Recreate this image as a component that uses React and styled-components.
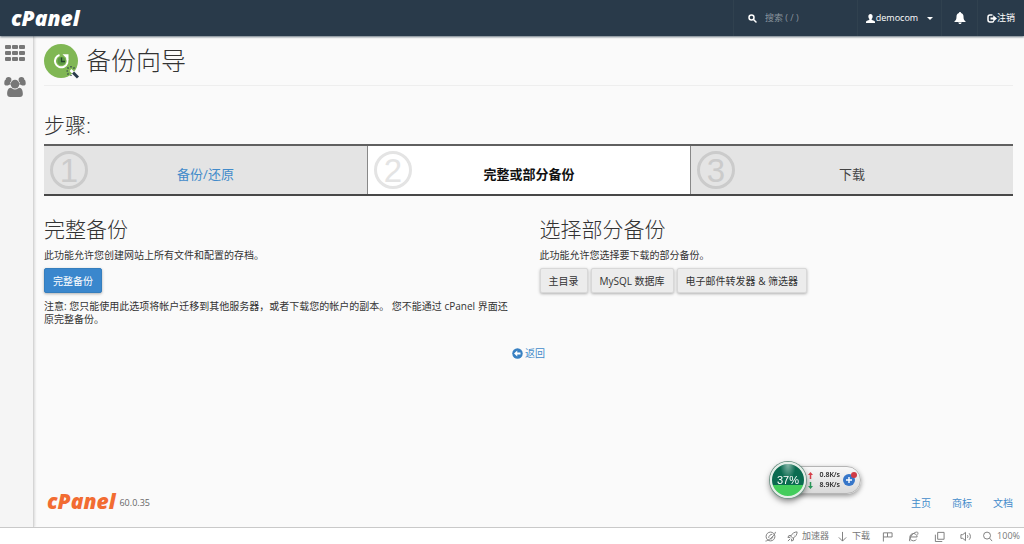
import React from "react";
import styled, { createGlobalStyle } from "styled-components";

const latin = '"Open Sans", "Noto Sans CJK SC", sans-serif';

const GlobalStyle = createGlobalStyle`
  *, *::before, *::after { box-sizing: border-box; }
  body {
    margin: 0;
    background: #fafafa;
    color: #333;
    font-family: ${latin};
    font-size: 10px;
    line-height: 13px;
  }
  button, input { font-family: inherit; }
  a { color: #428bca; text-decoration: none; }
  svg { display: block; flex: none; }
`;

const Page = styled.div`
  min-height: 100vh;
  display: flex;
  flex-direction: column;
`;

/* ---------- header ---------- */

const Header = styled.header`
  position: relative;
  height: 36px;
  display: flex;
  align-items: stretch;
  background: #293a4a;
  color: #fff;
  box-shadow: 0 1px 2px rgba(41, 58, 74, 0.7);
`;

const Logo = styled.a`
  font-family: "Open Sans", sans-serif;
  font-weight: 800;
  font-style: italic;
  font-size: 21px;
  line-height: 20px;
  color: ${(p) => p.$color};
`;

const Brand = styled.div`
  flex: 1;
  display: flex;
  align-items: center;
  padding-left: 11px;
`;

const HeaderCell = styled.div`
  width: ${(p) => p.$width}px;
  display: flex;
  align-items: center;
  border-left: 1px solid #30414f;
`;

const SearchLabel = styled.label`
  display: flex;
  align-items: center;
  gap: 8px;
  padding-left: 14px;
`;

const SearchInput = styled.input`
  width: 80px;
  padding: 0;
  border: 0;
  outline: 0;
  background: transparent;
  color: #fff;
  font-size: 9px;
  line-height: 14px;
  &::placeholder { color: #8b959e; opacity: 1; }
`;

const HeaderButton = styled.button`
  flex: 1;
  height: 100%;
  display: flex;
  align-items: center;
  justify-content: center;
  gap: ${(p) => p.$gap || 0}px;
  padding: 0;
  border: 0;
  background: transparent;
  color: #fff;
  font-size: 9px;
  line-height: 14px;
`;

const Caret = styled.span`
  margin-left: 8px;
  border: 3px solid transparent;
  border-top-color: #fff;
  border-bottom: 0;
`;

/* ---------- body ---------- */

const Body = styled.div`
  flex: 1;
  display: flex;
`;

const Sidebar = styled.nav`
  width: 34px;
  padding: 9px 3px 0 0;
  display: flex;
  flex-direction: column;
  align-items: center;
  gap: 16px;
  background: #f5f5f5;
  border-right: 1px solid #d5d5d5;
  box-shadow: 1px 0 2px rgba(0, 0, 0, 0.12);
`;

const SideLink = styled.a`
  width: 30px;
  display: flex;
  justify-content: center;
  color: #777;
`;

const Main = styled.main`
  flex: 1;
  min-width: 0;
  display: flex;
  flex-direction: column;
  padding: 8px 11px 16px 10px;
`;

const TitleRow = styled.div`
  display: flex;
  align-items: center;
  gap: 7px;
  height: 42px;
  padding-bottom: 6px;
  border-bottom: 1px solid #eee;
`;

const Title = styled.h1`
  margin: 0;
  font-size: 25px;
  line-height: 32px;
  font-weight: 300;
  padding-bottom: 4px;
`;

const SubTitle = styled.h2`
  margin: 0;
  font-size: 21px;
  line-height: 28px;
  font-weight: 300;
`;

const StepsSection = styled.section`
  padding-top: 25px;
`;

const Steps = styled.ol`
  margin: 5px 0 0;
  padding: 0;
  list-style: none;
  display: grid;
  grid-template-columns: repeat(3, 1fr);
  border-top: 2px solid #606060;
  border-bottom: 2px solid #484848;
`;

const Step = styled.li`
  display: grid;
  grid-template-columns: 38px 1fr 38px;
  align-items: center;
  height: 48px;
  padding: 0 6px;
  font-size: 13px;
  line-height: 18px;
  text-align: center;
  background: ${(p) => (p.$active ? "#fff" : "#e4e4e4")};
  color: ${(p) => (p.$active ? "#111" : "#444")};
  font-weight: ${(p) => (p.$active ? 700 : 400)};
  & + & { border-left: 1px solid #888; }
`;

const StepNumber = styled.span`
  width: 38px;
  height: 38px;
  border: 3px solid;
  border-radius: 50%;
  color: ${(p) => (p.$active ? "#e4e4e4" : "#cbcbcb")};
  font-family: "Liberation Sans", sans-serif;
  font-size: 33px;
  line-height: 33px;
  font-weight: 400;
`;

const StepLabel = styled.span`
  padding-top: 8px;
`;

const Columns = styled.div`
  display: grid;
  grid-template-columns: 1fr 1fr;
  gap: 22px;
  padding-top: 19px;
`;

const Text = styled.p`
  margin: ${(p) => p.$top}px 0 0;
`;

const ButtonRow = styled.div`
  display: flex;
  gap: 3px;
  margin-top: 6px;
`;

const Button = styled.button`
  height: 25px;
  padding: 0 8px;
  border: 1px solid ${(p) => (p.$primary ? "#357ebd" : "#d8d8d8")};
  border-radius: 2px;
  background: ${(p) => (p.$primary ? "#3a87cd" : "#ececec")};
  color: ${(p) => (p.$primary ? "#fff" : "#333")};
  font-size: 10px;
  line-height: 14px;
  white-space: nowrap;
  box-shadow: 0 1px 3px rgba(0, 0, 0, 0.3);
`;

const BackRow = styled.div`
  display: flex;
  justify-content: center;
  padding-top: 21px;
`;

const BackLink = styled.a`
  display: flex;
  align-items: center;
  gap: 2px;
`;

const Footer = styled.footer`
  margin-top: auto;
  display: flex;
  align-items: center;
  padding-left: 3px;
`;

const Version = styled.span`
  flex: 1;
  padding: 3px 0 0 4px;
  font-size: 9px;
  color: #666;
`;

const FooterLinks = styled.nav`
  display: flex;
  gap: 21px;
  padding-top: 4px;
`;

/* ---------- floating speed monitor ---------- */

const Monitor = styled.aside`
  position: fixed;
  right: 163px;
  bottom: 46px;
  display: flex;
  align-items: center;
  font-family: "Liberation Sans", sans-serif;
`;

const Gauge = styled.div`
  z-index: 1;
  width: 36px;
  height: 36px;
  display: flex;
  align-items: center;
  justify-content: center;
  border: 2px solid #e4efe8;
  border-radius: 50%;
  background:
    radial-gradient(ellipse at 50% 0, rgba(255, 255, 255, 0.5), transparent 35%),
    linear-gradient(#0a6b50 0 66%, #43cd5c 66%);
  box-shadow: 0 0 0 1px #73978a, 0 3px 6px rgba(0, 0, 0, 0.5);
  color: #fff;
  font-size: 11px;
`;

const Pill = styled.div`
  height: 28px;
  width: 74px;
  margin-left: -19px;
  padding: 0 5px 0 20px;
  display: flex;
  align-items: center;
  justify-content: space-between;
  border: 1px solid #b5b5b5;
  border-radius: 0 14px 14px 0;
  background: linear-gradient(#f8f8f8, #d9d9d9);
  box-shadow: 0 2px 5px rgba(0, 0, 0, 0.4);
`;

const Speeds = styled.div`
  flex: 1;
  font-family: "Open Sans", sans-serif;
  font-size: 7px;
  font-weight: 600;
  line-height: 10px;
  color: #222;
`;

const Speed = styled.div`
  display: flex;
  align-items: center;
  justify-content: space-between;
  padding-right: 3px;
`;

const AddButton = styled.button`
  position: relative;
  width: 12px;
  height: 12px;
  padding: 0;
  border: 0;
  border-radius: 50%;
  background: #3676c9;
  color: #fff;
  &::after {
    content: "";
    position: absolute;
    top: -2px;
    right: -2px;
    width: 6px;
    height: 6px;
    border-radius: 50%;
    background: #d03a45;
  }
`;

/* ---------- browser status bar ---------- */

const StatusBar = styled.div`
  height: 17px;
  display: flex;
  justify-content: flex-end;
  background: #fff;
  border-top: 1px solid #c9c9c9;
`;

const StatusButton = styled.button`
  min-width: 26px;
  display: flex;
  align-items: center;
  justify-content: center;
  gap: 4px;
  padding: 0 4px;
  border: 0;
  background: transparent;
  color: #777;
  font-size: 9px;
  line-height: 14px;
`;

/* ---------- drawings ---------- */

const SearchIcon = () => (
  <svg width="9" height="9" viewBox="0 0 18 18" fill="none" stroke="currentColor" strokeWidth="3" strokeLinecap="round" aria-hidden="true">
    <circle cx="7" cy="7" r="5" />
    <path d="M11 11l5 5" />
  </svg>
);

const UserIcon = () => (
  <svg width="9" height="9" viewBox="0 0 18 18" fill="currentColor" aria-hidden="true">
    <path d="M9 0c2.700 0 4.300 2 4.300 4.800 0 2.200-.8 4-2 5.200-.4.800-.2 1.600.7 2l4 1.700c1.300.6 2 1.300 2 2.300v2H0v-2c0-1 .7-1.700 2-2.300L6 12c.9-.4 1.100-1.200.7-2-1.200-1.200-2-3-2-5.200C4.700 2 6.300 0 9 0z" />
  </svg>
);

const BellIcon = () => (
  <svg width="12" height="12" viewBox="0 0 24 24" fill="currentColor" aria-hidden="true">
    <path d="M12 0c1.200 0 2 .9 2 2 3.200.8 5 3.400 5 7 0 5 1 7.500 4 9.500V20H1v-1.500C4 16.500 5 14 5 9c0-3.600 1.800-6.200 5-7 0-1.100.8-2 2-2zM8.500 21h7c-.3 1.800-1.600 3-3.500 3s-3.200-1.200-3.500-3z" />
  </svg>
);

const LogoutIcon = () => (
  <svg width="10" height="9" viewBox="0 0 20 18" aria-hidden="true">
    <path d="M11 2H6a4 4 0 0 0-4 4v6a4 4 0 0 0 4 4h5a2 2 0 0 0 2-2" fill="none" stroke="currentColor" strokeWidth="3" />
    <path d="M12.500 2.500L20 9l-7.500 6.500v-4.500H7V7h5.500z" fill="currentColor" />
  </svg>
);

const GridIcon = () => (
  <svg width="20" height="16" viewBox="0 0 20 16" fill="currentColor" aria-hidden="true">
    {[0, 6, 12].map((y) =>
      [0, 7, 14].map((x) => <rect key={`${x}-${y}`} x={x} y={y} width="6" height="4" rx="1" />)
    )}
  </svg>
);

const UsersIcon = () => (
  <svg width="22" height="20" viewBox="0 0 1920 1792" fill="currentColor" aria-hidden="true">
    <circle cx="384" cy="256" r="256" />
    <circle cx="1536" cy="256" r="256" />
    <circle cx="960" cy="640" r="384" />
    <path d="M593 640C485 643 397 686 328 768H194C85 768 0 712 0 609C0 374 41 256 124 256C140 256 265 343 384 343C429 343 473 335 517 320C505 415 515 525 593 640z" />
    <path d="M1327 640C1435 643 1523 686 1592 768H1726C1835 768 1920 712 1920 609C1920 374 1879 256 1796 256C1780 256 1655 343 1536 343C1491 343 1447 335 1403 320C1415 415 1405 525 1327 640z" />
    <path d="M1664 1533C1664 1700 1555 1792 1397 1792H523C365 1792 256 1700 256 1533C256 1250 330 960 583 960C610 960 760 1115 960 1115C1160 1115 1310 960 1337 960C1590 960 1664 1250 1664 1533z" />
  </svg>
);

const WizardIcon = () => (
  <svg width="35" height="35" viewBox="0 0 35 35" aria-hidden="true">
    <circle cx="17" cy="17" r="17" fill="#80b754" />
    <circle cx="17.500" cy="17" r="4" fill="#5c9a45" />
    <path d="M15.500 11A6.300 6.300 0 1 0 22.800 14" fill="none" stroke="#fff" strokeWidth="2" />
    <path d="M18.500 10.200h6v6z" fill="#fff" />
    <path d="M17.500 13.500v4h3.500" fill="none" stroke="#27472f" strokeWidth="1.300" />
    <path d="M29 28.500l5 5" stroke="#293a4a" strokeWidth="3" />
    <path d="M26.500 26l2.500 2.500" stroke="#fff" strokeWidth="2.600" />
    <path d="M27 22v1.500M22.500 27H24M23.500 23.500l1 1M30.500 23.500l-1 1M23.500 30.500l1-1M27 31v1" stroke="#293a4a" strokeWidth="1.200" />
  </svg>
);

const BackIcon = () => (
  <svg width="11" height="11" viewBox="0 0 22 22" aria-hidden="true">
    <circle cx="11" cy="11" r="10.500" fill="#3880c2" />
    <path d="M4 11l6.500-6v4H17v4h-6.500v4z" fill="#fff" />
  </svg>
);

const SpeedArrow = ({ up }) => (
  <svg width="5" height="7" viewBox="0 0 10 14" fill={up ? "#d8404a" : "#2c9a5b"} aria-hidden="true">
    <path d={up ? "M5 0l5 6H6.500v8h-3V6H0z" : "M5 14l5-6H6.500V0h-3v8H0z"} />
  </svg>
);

const PlusIcon = () => (
  <svg width="12" height="12" viewBox="0 0 12 12" stroke="#fff" strokeWidth="1.400" aria-hidden="true">
    <path d="M3 6h6M6 3v6" />
  </svg>
);

const statusShapes = {
  boost: (
    <>
      <circle cx="6" cy="6" r="4.800" />
      <path d="M.5 11C3 11 10 6 11.500 1M4 7.500c0-2 2-4 4-4M6 9c1.500-.5 2.500-1.500 2.500-3" />
    </>
  ),
  rocket: <path d="M11 1C8 1 6 2.500 4 5.500L6.500 8C9.500 6 11 4 11 1zM4.500 5H2L1 7h2.500M7 7.500V10l-2 1V8.500M3.500 8.500L1 11M7.500 4.500h.5" />,
  down: <path d="M6 1v10M2 7l4 4 4-4" />,
  flag: <path d="M1.500 11.500V2H6v4.500H1.500M6 2h5v4.500H6" />,
  ie: (
    <>
      <path d="M2.500 6.500h7.500A4 4 0 1 0 9.300 9" />
      <path d="M2.500 11C0 11.500 3 4 7.500 1.800 10.500.3 11.500 1.500 10.500 4" />
    </>
  ),
  windows: <path d="M4 1.500h7v7.500H4zM1.500 4v7.500h7.500" />,
  sound: <path d="M1 4h2l3-2.500v9L3 8H1zM8 4.500c.8 1 .8 2 0 3M10 2.500c1.800 2.200 1.800 5 0 7" />,
  zoom: (
    <>
      <circle cx="5.500" cy="5" r="3.800" />
      <path d="M8.300 7.800L11 11" />
    </>
  ),
};

const StatusIcon = ({ name }) => (
  <svg width="11" height="11" viewBox="0 0 12 12" fill="none" stroke="currentColor" strokeWidth="1" aria-hidden="true">
    {statusShapes[name]}
  </svg>
);

/* ---------- data ---------- */

const steps = [
  { label: "备份/还原", href: "#restore" },
  { label: "完整或部分备份", active: true },
  { label: "下载" },
];

const partialBackups = ["主目录", "MySQL 数据库", "电子邮件转发器 & 筛选器"];

const statusItems = [
  { icon: "boost", title: "优化" },
  { icon: "rocket", label: "加速器" },
  { icon: "down", label: "下载" },
  { icon: "flag", title: "标记" },
  { icon: "ie", title: "浏览器模式" },
  { icon: "windows", title: "窗口" },
  { icon: "sound", title: "声音" },
  { icon: "zoom", label: "100%" },
];

export default function App() {
  return (
    <Page>
      <GlobalStyle />
      <Header>
        <Brand>
          <Logo href="#home" $color="#fff">cPanel</Logo>
        </Brand>
        <HeaderCell $width={124}>
          <SearchLabel>
            <SearchIcon />
            <SearchInput type="text" placeholder="搜索 ( / )" aria-label="搜索" />
          </SearchLabel>
        </HeaderCell>
        <HeaderCell $width={84}>
          <HeaderButton $gap={1}>
            <UserIcon />
            democom
            <Caret />
          </HeaderButton>
        </HeaderCell>
        <HeaderCell $width={36}>
          <HeaderButton aria-label="通知">
            <BellIcon />
          </HeaderButton>
        </HeaderCell>
        <HeaderCell $width={47}>
          <HeaderButton>
            <LogoutIcon />
            注销
          </HeaderButton>
        </HeaderCell>
      </Header>

      <Body>
        <Sidebar>
          <SideLink href="#home" aria-label="主页"><GridIcon /></SideLink>
          <SideLink href="#users" aria-label="用户"><UsersIcon /></SideLink>
        </Sidebar>

        <Main>
          <TitleRow>
            <WizardIcon />
            <Title>备份向导</Title>
          </TitleRow>

          <StepsSection>
            <SubTitle>步骤:</SubTitle>
            <Steps>
              {steps.map(({ label, href, active }, i) => (
                <Step key={label} $active={active}>
                  <StepNumber $active={active}>{i + 1}</StepNumber>
                  <StepLabel>{href ? <a href={href}>{label}</a> : label}</StepLabel>
                </Step>
              ))}
            </Steps>
          </StepsSection>

          <Columns>
            <section>
              <SubTitle>完整备份</SubTitle>
              <Text $top={6}>此功能允许您创建网站上所有文件和配置的存档。</Text>
              <ButtonRow>
                <Button $primary>完整备份</Button>
              </ButtonRow>
              <Text $top={7}>
                注意: 您只能使用此选项将帐户迁移到其他服务器，或者下载您的帐户的副本。 您不能通过 cPanel 界面还原完整备份。
              </Text>
            </section>
            <section>
              <SubTitle>选择部分备份</SubTitle>
              <Text $top={6}>此功能允许您选择要下载的部分备份。</Text>
              <ButtonRow>
                {partialBackups.map((name) => (
                  <Button key={name}>{name}</Button>
                ))}
              </ButtonRow>
            </section>
          </Columns>

          <BackRow>
            <BackLink href="#back">
              <BackIcon />
              返回
            </BackLink>
          </BackRow>

          <Footer>
            <Logo href="#home" $color="#f26c32">cPanel</Logo>
            <Version>60.0.35</Version>
            <FooterLinks>
              <a href="#main">主页</a>
              <a href="#trademarks">商标</a>
              <a href="#docs">文档</a>
            </FooterLinks>
          </Footer>
        </Main>
      </Body>

      <StatusBar>
        {statusItems.map(({ icon, label, title }) => (
          <StatusButton key={icon} aria-label={title}>
            <StatusIcon name={icon} />
            {label}
          </StatusButton>
        ))}
      </StatusBar>

      <Monitor>
        <Gauge>37%</Gauge>
        <Pill>
          <Speeds>
            <Speed><SpeedArrow up />0.8K/s</Speed>
            <Speed><SpeedArrow />8.9K/s</Speed>
          </Speeds>
          <AddButton aria-label="加速">
            <PlusIcon />
          </AddButton>
        </Pill>
      </Monitor>
    </Page>
  );
}
